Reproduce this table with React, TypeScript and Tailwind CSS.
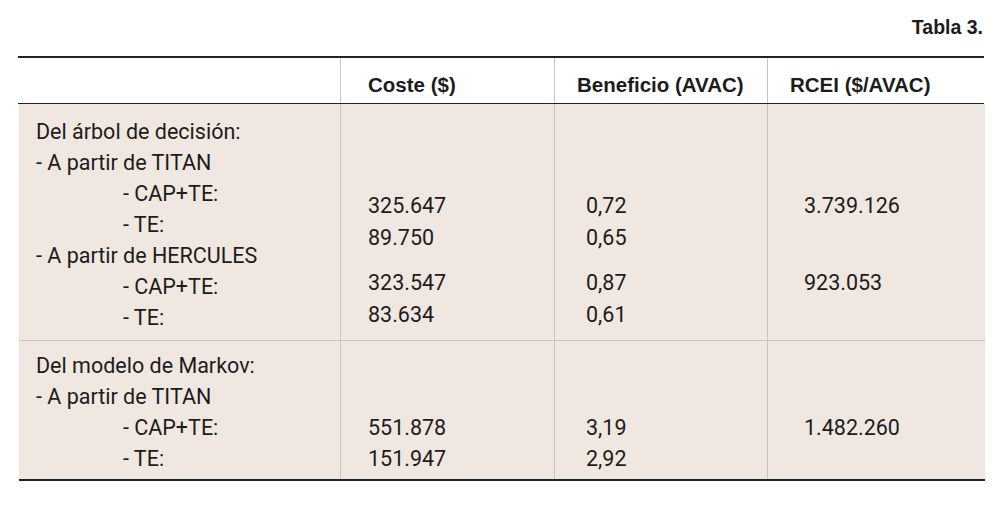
import React from "react";

const Cell = ({ children, className = "" }: { children?: React.ReactNode; className?: string }) => (
  <div className={`border-l border-[#cbc5c0] ${className}`}>{children}</div>
);

export default function App() {
  return (
    <div className="w-[1003px] h-[506px] bg-white text-[#1c1c1c] font-['Roboto',sans-serif]">
      <div className="flex justify-end pr-[20px] pt-[16px] h-[56px]">
        <span className="text-[19.5px] font-bold font-['Liberation_Sans',sans-serif] leading-[22px]">Tabla 3.</span>
      </div>
      <div className="ml-[18px] w-[966px] border-t-2 border-[#222]">
        {/* header */}
        <div className="grid grid-cols-[322px_214px_213px_1fr] h-[46px] border-b-[1.5px] border-[#222] font-['Liberation_Sans',sans-serif] font-bold text-[20.5px]">
          <div />
          <Cell className="flex items-center pl-[27px] pt-[9px]">Coste ($)</Cell>
          <Cell className="flex items-center pl-[22px] pt-[9px]">Beneficio (AVAC)</Cell>
          <Cell className="flex items-center pl-[22px] pt-[9px]">RCEI ($/AVAC)</Cell>
        </div>
        {/* row 1 */}
        <div className="ml-[1px] w-[966px] bg-[#f0e7e1] grid grid-cols-[321px_214px_213px_1fr] h-[237px] border-b border-[#cbc5c0] text-[21.5px]">
          <div className="pl-[17px] pt-[12px] leading-[31px]">
            <div>Del árbol de decisión:</div>
            <div>- A partir de TITAN</div>
            <div className="pl-[87px]">- CAP+TE:</div>
            <div className="pl-[87px]">- TE:</div>
            <div>- A partir de HERCULES</div>
            <div className="pl-[87px]">- CAP+TE:</div>
            <div className="pl-[87px]">- TE:</div>
          </div>
          <Cell className="pl-[27px] pt-[86px] leading-[32px]">
            <div>325.647</div>
            <div>89.750</div>
            <div className="mt-[13px]">323.547</div>
            <div>83.634</div>
          </Cell>
          <Cell className="pl-[31px] pt-[86px] leading-[32px]">
            <div>0,72</div>
            <div>0,65</div>
            <div className="mt-[13px]">0,87</div>
            <div>0,61</div>
          </Cell>
          <Cell className="pl-[36px] pt-[86px] leading-[32px]">
            <div>3.739.126</div>
            <div className="mt-[45px]">923.053</div>
          </Cell>
        </div>
        {/* row 2 */}
        <div className="ml-[1px] w-[966px] bg-[#f0e7e1] grid grid-cols-[321px_214px_213px_1fr] h-[140px] border-b-2 border-[#222] text-[21.5px]">
          <div className="pl-[17px] pt-[9px] leading-[31px]">
            <div>Del modelo de Markov:</div>
            <div>- A partir de TITAN</div>
            <div className="pl-[87px]">- CAP+TE:</div>
            <div className="pl-[87px]">- TE:</div>
          </div>
          <Cell className="pl-[27px] pt-[71px] leading-[31px]">
            <div>551.878</div>
            <div>151.947</div>
          </Cell>
          <Cell className="pl-[31px] pt-[71px] leading-[31px]">
            <div>3,19</div>
            <div>2,92</div>
          </Cell>
          <Cell className="pl-[36px] pt-[71px] leading-[31px]">
            <div>1.482.260</div>
          </Cell>
        </div>
      </div>
    </div>
  );
}
